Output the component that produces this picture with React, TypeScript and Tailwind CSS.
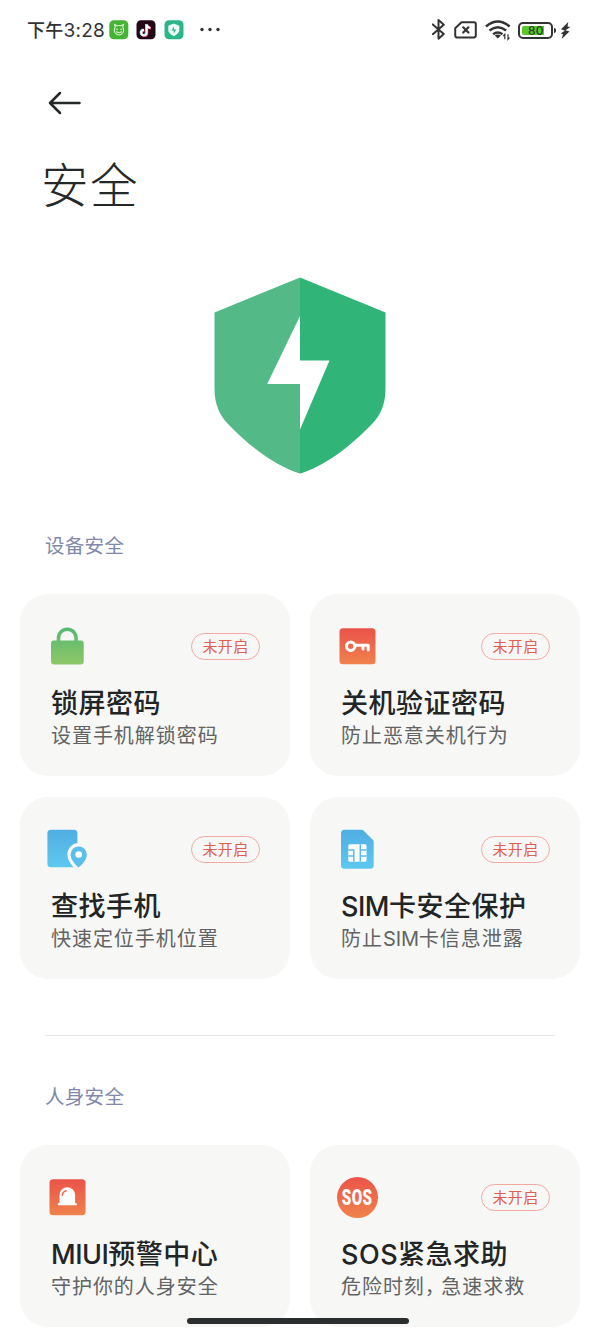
import React from 'react'

type Item = {
  icon: React.ReactNode
  title: React.ReactNode
  desc: React.ReactNode
  off?: boolean
}

function RedGradient({ id }: { id: string }) {
  return (
    <linearGradient id={id} x1="0" y1="0" x2="0" y2="1">
      <stop offset="0" stopColor="#ea5349" />
      <stop offset="1" stopColor="#f0824c" />
    </linearGradient>
  )
}

function BlueGradient({ id }: { id: string }) {
  return (
    <linearGradient id={id} x1="0" y1="0" x2="0" y2="1">
      <stop offset="0" stopColor="#50aee2" />
      <stop offset="1" stopColor="#5ec8f0" />
    </linearGradient>
  )
}

function LockIcon() {
  return (
    <svg className="ml-[2px]" width="34" height="42" viewBox="0 0 34 42">
      <defs>
        <linearGradient id="lock" gradientUnits="userSpaceOnUse" x1="0" y1="2" x2="0" y2="40">
          <stop offset="0" stopColor="#55b873" />
          <stop offset="1" stopColor="#8fc767" />
        </linearGradient>
      </defs>
      <path d="M8.5 18v-5a8.8 8.8 0 0 1 17.6 0v5" fill="none" stroke="url(#lock)" strokeWidth="3.6" />
      <rect x="1" y="15.5" width="32.7" height="24" rx="3" fill="url(#lock)" />
    </svg>
  )
}

function KeyIcon() {
  return (
    <svg width="38" height="42" viewBox="0 0 38 42">
      <defs><RedGradient id="key" /></defs>
      <rect x="1.5" y="3.3" width="36" height="36" rx="3.5" fill="url(#key)" />
      <circle cx="12.7" cy="21.2" r="4.2" fill="none" stroke="#fff" strokeWidth="3" />
      <path d="M17.2 20.2h13v4.8M25 20.5v3.6" fill="none" stroke="#fff" strokeWidth="3" strokeLinejoin="round" strokeLinecap="round" />
    </svg>
  )
}

function FindIcon() {
  return (
    <svg className="-ml-px" width="42" height="42" viewBox="0 0 42 42">
      <defs><BlueGradient id="find" /></defs>
      <rect x="0.4" y="1.7" width="30" height="37.5" rx="3.5" fill="url(#find)" />
      <path
        d="M31.6 39.5C27.7 36 23.6 31.5 23.6 26.5a8.1 8.1 0 0 1 16.2 0C39.8 31.5 35.6 36 31.6 39.5z"
        fill="#5abfeb"
        stroke="#f7f7f6"
        strokeWidth="6.6"
        paintOrder="stroke"
      />
      <circle cx="31.7" cy="26.5" r="3.3" fill="#fff" />
    </svg>
  )
}

function SimIcon() {
  return (
    <svg className="ml-[3px]" width="34" height="42" viewBox="0 0 34 42">
      <defs><BlueGradient id="sim" /></defs>
      <path d="M3.5 1.7h17q1.2 0 2 .8l9.5 9.4q.7.7.7 2V37.2q0 3.5-3.5 3.5H3.500Q0 40.700 0 37.200V5.200Q0 1.700 3.500 1.700z" fill="url(#sim)" />
      <rect x="7.3" y="16.2" width="18.2" height="17.5" rx="1.5" fill="#fff" />
      <path d="M7.3 22h6M7.3 27.9h6M12.8 21.3v12.4M19.3 16.2v17.5M19.3 22h6.2M19.3 27.9h6.2" stroke="#59bce9" strokeWidth="1.5" fill="none" />
    </svg>
  )
}

function AlarmIcon() {
  return (
    <svg width="38" height="42" viewBox="0 0 38 42">
      <defs><RedGradient id="alarm" /></defs>
      <rect x="1.500" y="3.300" width="36" height="36" rx="3.500" fill="url(#alarm)" />
      <path d="M11.500 27.300V19a7.800 7.800 0 0 1 15.600 0v8.300h1.700v2H9.800v-2z" fill="#fff" />
      <path d="M14.300 19.200q.3-3.500 3.800-4.500" fill="none" stroke="#ed6549" strokeWidth="1.600" strokeLinecap="round" />
    </svg>
  )
}

function SosIcon() {
  return (
    <div className="-ml-px flex h-[41px] w-[41px] items-center justify-center rounded-full bg-linear-to-b from-[#ea5349] to-[#f0824c]">
      <span className="scale-x-[0.690] pt-[2px] font-['Roboto',sans-serif] text-[22px] leading-[26px] font-black tracking-[0.500px] text-white">SOS</span>
    </div>
  )
}

function Shield() {
  return (
    <svg width="172" height="197" viewBox="0 0 172 197">
      <path d="M86 .5L.5 35.500V112C.5 128 6 138.500 14 147 38 172 64 190 86 196.500z" fill="#52b987" />
      <path d="M86 .5l85.500 35V112c0 16-5.500 26.500-13.500 35-24 25-50 43-72 49.500z" fill="#31b477" />
      <path d="M86 39v44.500h29.500L86 152.500V107H53.200z" fill="#fff" />
    </svg>
  )
}

function Card({ icon, title, desc, off }: Item) {
  return (
    <div className="h-[182px] rounded-[28px] bg-[#f7f7f6] pt-[31px] pl-[28px] pr-[30px]">
      <div className="flex h-[42px] items-center justify-between">
        {icon}
        {off && (
          <span className="flex h-[27px] w-[69px] items-center justify-center rounded-full border border-[#f3a9a0] pt-[2px] text-[15px] tracking-[0.3px] text-[#e0604f]">
            未开启
          </span>
        )}
      </div>
      <h2 className="mt-[18px] ml-[3px] text-[27px] leading-[38px] font-medium tracking-[0.5px] whitespace-nowrap text-[#222525]">{title}</h2>
      <p className="-mt-px ml-[3px] text-[20px] leading-[28px] tracking-[0.95px] whitespace-nowrap text-[#626464]">{desc}</p>
    </div>
  )
}

const device: Item[] = [
  { icon: <LockIcon />, title: '锁屏密码', desc: '设置手机解锁密码', off: true },
  { icon: <KeyIcon />, title: '关机验证密码', desc: '防止恶意关机行为', off: true },
  { icon: <FindIcon />, title: '查找手机', desc: '快速定位手机位置', off: true },
  { icon: <SimIcon />, title: <><span className="tracking-[-0.5px]">SIM</span>卡安全保护</>, desc: <>防止<span className="tracking-[-0.1px]">SIM</span>卡信息泄露</>, off: true },
]

const personal: Item[] = [
  { icon: <AlarmIcon />, title: <><span className="tracking-[-0.5px]">MIUI</span>预警中心</>, desc: '守护你的人身安全' },
  { icon: <SosIcon />, title: 'SOS紧急求助', desc: <>危险时刻<span className="tracking-[-3.5px]">，</span>急速求救</>, off: true },
]

function StatusBar() {
  return (
    <header className="flex h-[60px] items-center justify-between pl-[27px] pr-[29px] text-[#333]">
      <div className="flex items-center">
        <span className="text-[18px] leading-none font-medium tracking-[0.2px]">下午<span className="text-[19px] font-normal tracking-[0.3px]">3:28</span></span>
        <svg className="ml-[4px]" width="20" height="20" viewBox="0 0 20 20">
          <rect x=".3" y=".3" width="19" height="19" rx="4.5" fill="#45b435" />
          <g fill="none" stroke="#d3f1c8" strokeWidth="1.1" strokeLinecap="round">
            <path d="M6.3 7L5.500 4.500l2.700 1.300q1.800-.5 3.600 0l2.700-1.300L13.700 7q2 3.500 0 6-1.700 2-3.700 2t-3.700-2q-2-2.500 0-6z" />
            <path d="M7.300 9.300h1.200M11.500 9.300h1.200M7.500 11.800q2.500 1.800 5 0" />
          </g>
        </svg>
        <svg className="ml-[7px]" width="20" height="20" viewBox="0 0 20 20">
          <rect x=".5" y=".3" width="19" height="19" rx="4.5" fill="#240716" />
          <g fill="none" strokeWidth="2">
            <path d="M10 4v8.300a2.700 2.700 0 1 1-2.700-2.700M10 4q.5 3 3.600 3.500" stroke="#42dfe5" />
            <path d="M11.300 5v8.300a2.700 2.700 0 1 1-2.700-2.700M11.300 5q.5 3 3.600 3.500" stroke="#ed3359" />
            <path d="M10.700 4.500v8.300A2.700 2.700 0 1 1 8 10.100M10.700 4.500q.5 3 3.600 3.500" stroke="#fff" />
          </g>
        </svg>
        <svg className="ml-[8px]" width="20" height="20" viewBox="0 0 20 20">
          <rect x=".5" y=".3" width="19" height="19" rx="4.5" fill="#2bb68a" />
          <path d="M9.800 3.500l5.500 2.200v4.600q0 3.200-5.500 6-5.500-2.800-5.500-6V5.700z" fill="#eefbf4" />
          <path d="M10 6.500v3h2.200L9.700 13.500v-3H7.500z" fill="#2bb68a" />
        </svg>
        <svg className="ml-[15px]" width="22" height="6" viewBox="0 0 22 6" fill="#333">
          <circle cx="3" cy="2.5" r="1.7" /><circle cx="11" cy="2.5" r="1.7" /><circle cx="19" cy="2.5" r="1.7" />
        </svg>
      </div>

      <div className="flex items-center">
        <svg width="14" height="22" viewBox="0 0 14 22" fill="none" stroke="#333" strokeWidth="2" strokeLinejoin="round" strokeLinecap="round">
          <path d="M1.300 6l11 9.500L7 20.300V1.700l5.300 4.600-11 9.500" transform="translate(-.5 -.6)" />
        </svg>
        <svg className="ml-[8px]" width="24" height="20" viewBox="0 0 24 20" fill="none" stroke="#333" strokeWidth="2" strokeLinejoin="round" strokeLinecap="round">
          <path d="M7.500 2.300H20q1.800 0 1.800 1.800v11.500q0 1.800-1.800 1.800H3q-1.800 0-1.800-1.800V8.300z" />
          <path d="M9.200 7.300l5.200 5.200M14.400 7.300l-5.200 5.200" strokeWidth="2.200" />
        </svg>
        <svg className="ml-[7px]" width="26" height="22" viewBox="0 0 26 22" fill="none" stroke="#333" strokeWidth="2.500">
          <path d="M1 7.500q11.800-10 23.600 0M4.500 11.500q8.300-6.500 16.600 0M8.200 15.200q4.600-3.500 9.200 0" />
          <path d="M9.700 16.500q3.100-2 6.200 0l-3.100 3z" fill="#333" stroke="none" />
          <path d="M19.800 20.300v-5l-1.500 1.700M23 15.300v5l1.500-1.700" strokeWidth="1.200" />
        </svg>
        <div className="ml-[7px] flex h-[17px] w-[35px] rounded-[5px] border-2 border-[#333] p-[2px]">
          <div className="relative h-full w-[22px] rounded-l-[2px] bg-[#5ac82c]">
            <span className="absolute top-[-2px] left-[6px] text-[12px] leading-[13px] font-medium tracking-[0.2px] text-[#26401f]">80</span>
          </div>
        </div>
        <div className="ml-[1px] h-[5px] w-[2px] rounded-r-sm bg-[#333]" />
        <svg className="ml-[4px]" width="11" height="17" viewBox="0 0 11 17" fill="#333">
          <path d="M8.300 0L1 7.300l4 1.500L.5 11.500 3 12l-1.300 5 7.800-7.500-4-1.300L10.300 5 7.500 4.400z" />
        </svg>
      </div>
    </header>
  )
}

export default function App() {
  return (
    <div className="relative h-[1333px] w-[600px] overflow-hidden bg-white font-['Inter','Noto_Sans_CJK_SC',sans-serif]" lang="zh-CN">
      <StatusBar />
      <button className="mt-[31px] ml-[48px] block" aria-label="返回">
        <svg width="34" height="24" viewBox="0 0 34 24" fill="none" stroke="#252828" strokeWidth="2.5" strokeLinecap="round" strokeLinejoin="round">
          <path d="M31.500 12H2M12 2L2 12l10 10" />
        </svg>
      </button>
      <h1 className="mt-[36px] ml-[41px] text-[47.5px] leading-[70px] font-light tracking-[1.5px] text-[#242828]">安全</h1>

      <div className="mt-[56px] flex justify-center">
        <Shield />
      </div>

      <h3 className="mt-[57px] ml-[45px] text-[19.5px] leading-[30px] tracking-[0.3px] text-[#8188ab]">设备安全</h3>
      <section className="mx-[20px] mt-[33px] grid grid-cols-2 gap-x-[20px] gap-y-[21px]">
        {device.map((item, i) => <Card key={i} {...item} />)}
      </section>

      <hr className="mx-[45px] mt-[56px] border-[#e6e6e5]" />

      <h3 className="mt-[46px] ml-[45px] text-[19.5px] leading-[30px] tracking-[0.3px] text-[#8188ab]">人身安全</h3>
      <section className="mx-[20px] mt-[33px] grid grid-cols-2 gap-x-[20px]">
        {personal.map((item, i) => <Card key={i} {...item} />)}
      </section>

      <div className="absolute top-[1318px] left-[187px] h-[6px] w-[222px] rounded-full bg-[#2b2e2e]" />
    </div>
  )
}
